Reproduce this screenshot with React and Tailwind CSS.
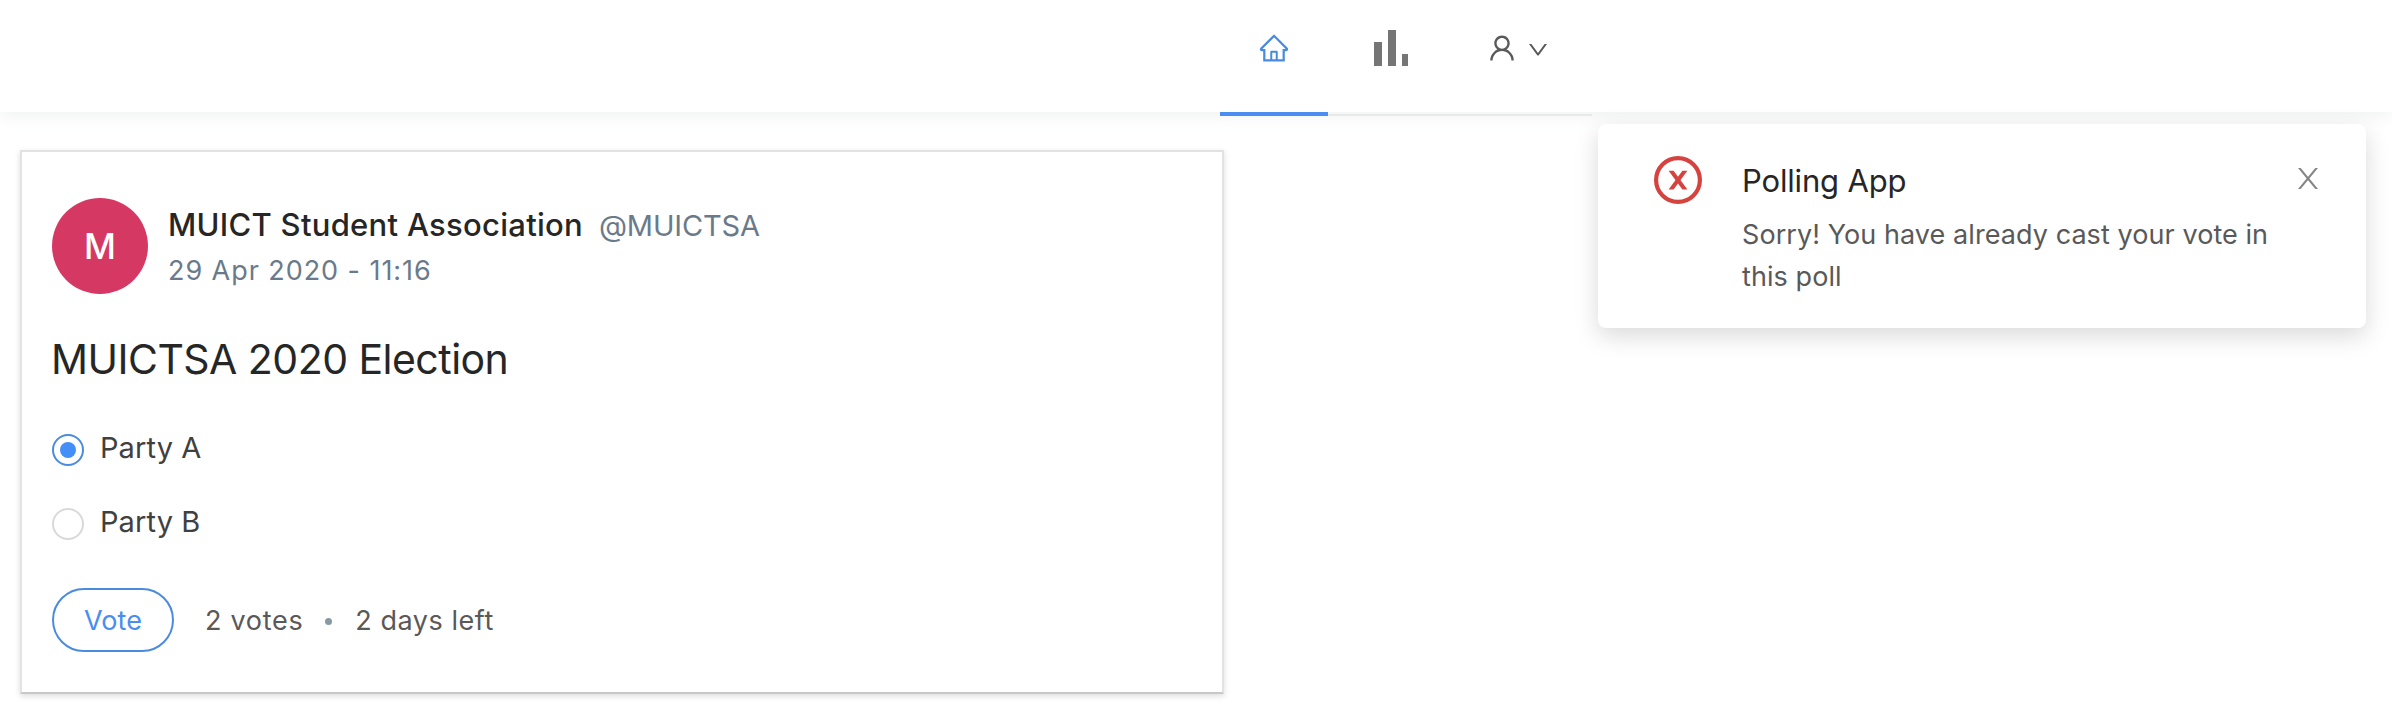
import { AiOutlineHome, AiOutlineUser } from "react-icons/ai";

function BarsIcon() {
  return (
    <svg width="34" height="36" viewBox="0 0 34 36" fill="#757575" className="shrink-0">
      <rect x="0" y="12" width="8" height="24" />
      <rect x="14" y="0" width="8" height="36" />
      <rect x="28" y="24" width="6" height="12" />
    </svg>
  );
}

function ChevronIcon() {
  return (
    <svg width="18" height="12" viewBox="0 0 18 12" fill="currentColor" className="mt-[12px] shrink-0">
      <path d="M0 0H2.4L9 9L15.6 0H18L9.8 11.2Q9 12 8.2 11.2Z" />
    </svg>
  );
}

function ErrorIcon() {
  return (
    <svg width="48" height="48" viewBox="0 0 48 48" className="shrink-0">
      <circle cx="24" cy="24" r="21.9" fill="none" stroke="#d6423d" strokeWidth="4.2" />
      <path d="M14.6 14.8H19.6L33.4 33.4H28.4Z" fill="#d6423d" />
      <path d="M33.4 14.8H28.4L14.6 33.4H19.6Z" fill="#d6423d" />
    </svg>
  );
}

function CloseIcon() {
  return (
    <svg width="20" height="21" viewBox="0 0 20 21" className="mt-[12px] ml-[16px] shrink-0 text-[#858585]" fill="currentColor">
      <path d="M0 0H2.7L20 21H17.3Z" />
      <path d="M20 0H17.3L0 21H2.7Z" />
    </svg>
  );
}

function Header() {
  return (
    <header className="relative flex h-[112px] bg-white pl-[1220px] shadow-[0_4px_16px_#f0f1f2]">
      <nav className="flex h-[116px] shrink-0">
        <a className="flex w-[108px] justify-center border-b-4 border-[#4a8df0] pt-8 text-[#4a8bdf]">
          <AiOutlineHome size={32} />
        </a>
        <a className="flex w-[144px] border-b-2 border-[#e8e8e8] pt-[30px] pl-[46px]">
          <BarsIcon />
        </a>
        <a className="flex w-[120px] items-start gap-[11px] border-b-2 border-[#e8e8e8] pt-8 pl-[14px] text-[#595959]">
          <AiOutlineUser size={32} />
          <ChevronIcon />
        </a>
      </nav>
    </header>
  );
}

function Option({ label, checked }) {
  return (
    <label className="flex h-[74px] items-center">
      <span
        className={
          checked
            ? "mt-[3px] flex size-8 items-center justify-center rounded-full border-2 border-[#4a8bdf]"
            : "mt-[3px] flex size-8 items-center justify-center rounded-full border-2 border-[#d9d9d9]"
        }
      >
        {checked && <span className="size-4 rounded-full bg-[#448ef7]" />}
      </span>
      <span className="ml-[16px] text-[29px] leading-[44px] tracking-[0.1px] text-[#404040]">{label}</span>
    </label>
  );
}

function PollCard() {
  return (
    <article className="mt-[38px] ml-5 h-[544px] w-[1204px] border-2 border-[#e2e2e2] border-b-[#c8c8c8] bg-white px-[30px] pt-[46px] shadow-[0_2px_6px_rgba(0,0,0,0.14)]">
      <div className="flex">
        <div className="flex size-24 items-center justify-center rounded-full bg-[#d63864] text-[35px] leading-[48px] font-medium text-white">
          M
        </div>
        <div className="ml-5 pt-[5px]">
          <div className="flex items-baseline leading-[44px] whitespace-nowrap">
            <span className="text-[31px] font-medium tracking-[0.28px] text-[#262626]">MUICT Student Association</span>
            <span className="ml-[16px] text-[29px] tracking-[-0.15px] text-[#6b7a8a]">@MUICTSA</span>
          </div>
          <div className="mt-[3px] text-[27px] leading-[40px] tracking-[0.94px] text-[#6b7a8a]">29 Apr 2020 - 11:16</div>
        </div>
      </div>
      <h2 className="mt-[35px] -ml-px text-[41px] leading-[60px] tracking-[-0.53px] text-[#262626]">MUICTSA 2020 Election</h2>
      <div className="mt-[22px]">
        <Option label="Party A" checked />
        <Option label="Party B" />
      </div>
      <div className="mt-[29px] flex items-center text-[27px] leading-[40px] text-[#595959]">
        <button className="h-16 w-[122px] rounded-full border-2 border-[#4a8bdf] pt-px text-[#4a8df0]">Vote</button>
        <span className="ml-[31px] pt-[2px] tracking-[0.7px]">2 votes</span>
        <span className="mt-[3px] ml-[22px] size-[7px] rounded-full bg-[#8899a6]" />
        <span className="ml-[23px] pt-[2px] tracking-[0.53px]">2 days left</span>
      </div>
    </article>
  );
}

function Notification() {
  return (
    <div className="absolute top-[124px] right-[26px] flex h-[204px] w-[768px] rounded-lg bg-white pt-8 pl-14 shadow-[0_8px_24px_rgba(0,0,0,0.15)]">
      <ErrorIcon />
      <div className="ml-[40px] w-[540px] shrink-0 pt-px">
        <div className="text-[31px] leading-[48px] tracking-[-0.17px] text-[#262626]">Polling App</div>
        <p className="mt-[9px] text-[27px] leading-[42px] tracking-[0.07px] text-[#595959]">
          Sorry! You have already cast your vote in this poll
        </p>
      </div>
      <CloseIcon />
    </div>
  );
}

export default function App() {
  return (
    <div className="relative h-[706px] w-[2392px] overflow-hidden bg-white font-[Inter,sans-serif]">
      <Header />
      <PollCard />
      <Notification />
    </div>
  );
}
